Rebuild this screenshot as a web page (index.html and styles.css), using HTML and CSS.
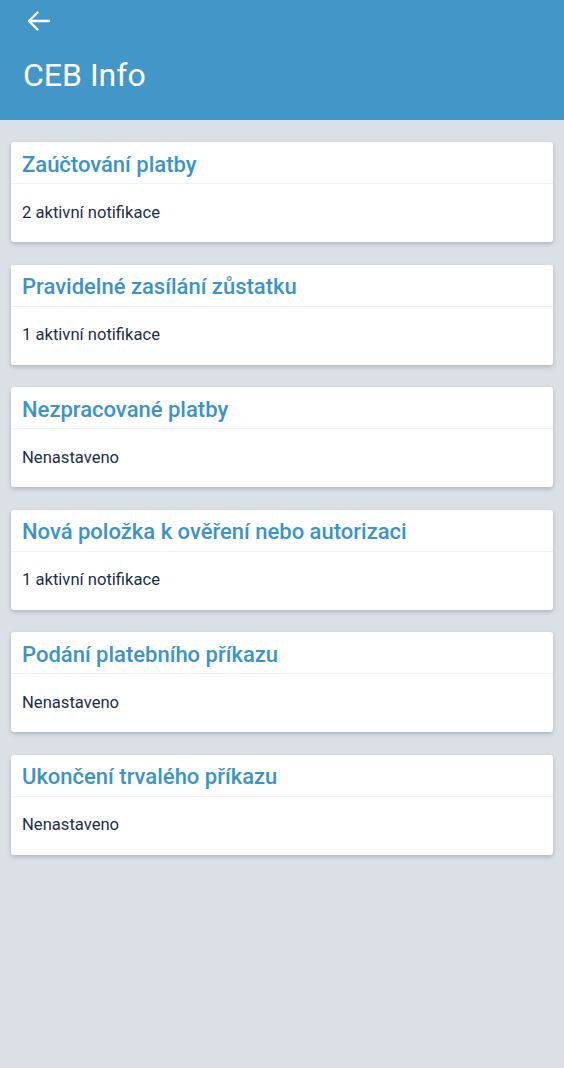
FILE: index.html
```html
<!DOCTYPE html>
<html lang="cs">
<head>
<meta charset="utf-8">
<link rel="stylesheet" href="styles.css">
</head>
<body>
<header class="appbar">
  <div class="back">
    <svg width="26" height="26" viewBox="0 0 26 26"><path d="M24 13H4M12.5 4.5L4 13l8.5 8.5" fill="none" stroke="#fff" stroke-width="2.4" stroke-linecap="round" stroke-linejoin="round"/></svg>
  </div>
  <h1 class="title">CEB Info</h1>
</header>
<main class="list">
  <section class="card"><div class="card-head">Zaúčtování platby</div><div class="card-body">2 aktivní notifikace</div></section>
  <section class="card"><div class="card-head">Pravidelné zasílání zůstatku</div><div class="card-body">1 aktivní notifikace</div></section>
  <section class="card"><div class="card-head">Nezpracované platby</div><div class="card-body">Nenastaveno</div></section>
  <section class="card"><div class="card-head">Nová položka k ověření nebo autorizaci</div><div class="card-body">1 aktivní notifikace</div></section>
  <section class="card"><div class="card-head">Podání platebního příkazu</div><div class="card-body">Nenastaveno</div></section>
  <section class="card"><div class="card-head">Ukončení trvalého příkazu</div><div class="card-body">Nenastaveno</div></section>
</main>
</body>
</html>
```
FILE: styles.css
```css
html, body {
  margin: 0;
  padding: 0;
  background: #dbe0e6;
  font-family: Roboto, "Noto Sans", sans-serif;
  min-height: 1068px;
}
.appbar {
  background: #4396c8;
  height: 120px;
  box-sizing: border-box;
  padding: 8px 0 0 23px;
}
.back {
  width: 30px;
  height: 26px;
  display: flex;
  align-items: center;
  padding-left: 2px;
}
.title {
  margin: 21px 0 0 0;
  color: #fff;
  font-weight: 400;
  font-size: 32px;
  line-height: 40px;
}
.list {
  display: flex;
  flex-direction: column;
  gap: 22.5px;
  padding: 22px 11px 0 11px;
}
.card {
  background: #fff;
  border-radius: 3px;
  box-shadow: 0 2px 4px rgba(60, 70, 90, 0.28);
  height: 100px;
  display: flex;
  flex-direction: column;
}
.card-head {
  height: 42px;
  border-bottom: 1px solid #eef0f2;
  box-sizing: border-box;
  padding: 3px 11px 0 11px;
  display: flex;
  align-items: center;
  color: #3b93c8;
  font-size: 22px;
  font-weight: 500;
}
.card-body {
  flex: 1;
  padding: 0 11px;
  display: flex;
  align-items: center;
  color: #1d2d4d;
  font-size: 16.6px;
  padding-bottom: 2px;
}
```
